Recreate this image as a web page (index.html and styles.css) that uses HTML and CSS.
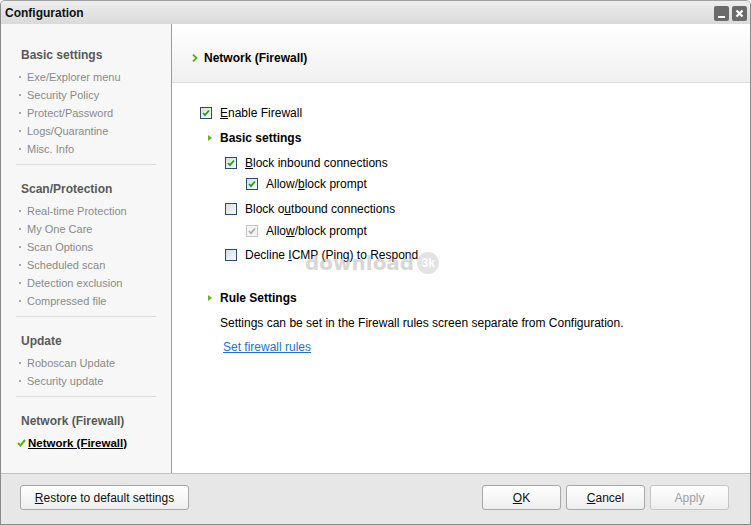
FILE: index.html
```html
<!DOCTYPE html>
<html>
<head>
<meta charset="utf-8">
<link rel="stylesheet" href="styles.css">
</head>
<body>
<div class="window">
  <div class="titlebar">
    <span class="title">Configuration</span>
    <div class="winbtns">
      <span class="winbtn"><svg width="15" height="15" viewBox="0 0 15 15"><rect x="4" y="10" width="7" height="2" fill="#fff"/></svg></span>
      <span class="winbtn"><svg width="15" height="15" viewBox="0 0 15 15"><path d="M4.5 4.5 L10.5 10.5 M10.5 4.5 L4.5 10.5" stroke="#fff" stroke-width="2.2"/></svg></span>
    </div>
  </div>
  <div class="main">
    <nav class="sidebar">
      <div class="group first">
        <div class="ghead">Basic settings</div>
        <div class="item">Exe/Explorer menu</div>
        <div class="item">Security Policy</div>
        <div class="item">Protect/Password</div>
        <div class="item">Logs/Quarantine</div>
        <div class="item">Misc. Info</div>
      </div>
      <div class="group">
        <div class="ghead">Scan/Protection</div>
        <div class="item">Real-time Protection</div>
        <div class="item">My One Care</div>
        <div class="item">Scan Options</div>
        <div class="item">Scheduled scan</div>
        <div class="item">Detection exclusion</div>
        <div class="item">Compressed file</div>
      </div>
      <div class="group">
        <div class="ghead">Update</div>
        <div class="item">Roboscan Update</div>
        <div class="item">Security update</div>
      </div>
      <div class="group last">
        <div class="ghead">Network (Firewall)</div>
        <div class="item selected"><svg class="tick" width="9" height="8" viewBox="0 0 9 8"><path d="M1 4 L3.5 6.5 L8 1" stroke="#5fae1f" stroke-width="2" fill="none"/></svg><span>Network (Firewall)</span></div>
      </div>
    </nav>
    <section class="content">
      <div class="chead">
        <svg class="chev" width="6" height="8" viewBox="0 0 6 8"><path d="M1 0.5 L4.5 4 L1 7.5" stroke="#5fae1f" stroke-width="1.8" fill="none"/></svg>
        <span>Network (Firewall)</span>
      </div>
      <div class="cbody">
        <div class="row r-enable">
          <span class="cb on"><svg width="12" height="12" viewBox="0 0 12 12"><path d="M3 6 L5 8.2 L9 3.5" stroke="#1fa01f" stroke-width="1.8" fill="none"/></svg></span>
          <span class="lbl"><u>E</u>nable Firewall</span>
        </div>
        <div class="row sub r-basic"><span class="tri"></span><b>Basic settings</b></div>
        <div class="row lvl1 r-in">
          <span class="cb on"><svg width="12" height="12" viewBox="0 0 12 12"><path d="M3 6 L5 8.2 L9 3.5" stroke="#1fa01f" stroke-width="1.8" fill="none"/></svg></span>
          <span class="lbl"><u>B</u>lock inbound connections</span>
        </div>
        <div class="row lvl2 r-allow1">
          <span class="cb on"><svg width="12" height="12" viewBox="0 0 12 12"><path d="M3 6 L5 8.2 L9 3.5" stroke="#1fa01f" stroke-width="1.8" fill="none"/></svg></span>
          <span class="lbl">Allow/<u>b</u>lock prompt</span>
        </div>
        <div class="row lvl1 r-out">
          <span class="cb"></span>
          <span class="lbl">Block o<u>u</u>tbound connections</span>
        </div>
        <div class="row lvl2 r-allow2">
          <span class="cb dis"><svg width="12" height="12" viewBox="0 0 12 12"><path d="M3 6 L5 8.2 L9 3.5" stroke="#a8a8a8" stroke-width="1.6" fill="none"/></svg></span>
          <span class="lbl">Allo<u>w</u>/block prompt</span>
        </div>
        <div class="row lvl1 r-icmp">
          <span class="cb"></span>
          <span class="lbl">Decline <u>I</u>CMP (Ping) to Respond</span>
        </div>
        <div class="row sub r-rule"><span class="tri"></span><b>Rule Settings</b></div>
        <div class="row txt r-desc">Settings can be set in the Firewall rules screen separate from Configuration.</div>
        <div class="row txt r-link"><a class="link">Set firewall rules</a></div>
        <div class="watermark"><span class="wm-text">download</span><span class="wm-logo">3k</span></div>
      </div>
    </section>
  </div>
  <div class="footer">
    <button class="btn restore"><u>R</u>estore to default settings</button>
    <div class="spacer"></div>
    <button class="btn"><u>O</u>K</button>
    <button class="btn"><u>C</u>ancel</button>
    <button class="btn disabled">Apply</button>
  </div>
</div>
</body>
</html>
```

FILE: styles.css
```css
html, body {
  margin: 0;
  padding: 0;
  background: #fff;
}
body {
  font-family: "Liberation Sans", Arial, sans-serif;
  font-size: 12px;
  color: #000;
}
.window {
  width: 751px;
  height: 525px;
  box-sizing: border-box;
  border: 1px solid #8a8a8a;
  border-top-color: #a0a0a0;
  border-radius: 5px 5px 0 0;
  display: flex;
  flex-direction: column;
  overflow: hidden;
}
.titlebar {
  height: 23px;
  flex: none;
  background: linear-gradient(#ededed, #dadada);
  display: flex;
  align-items: center;
  padding: 0 3px 0 4px;
}
.title {
  font-weight: bold;
  font-size: 12px;
  flex: 1;
  color: #111;
  padding-top: 1px;
}
.winbtns {
  display: flex;
  gap: 3px;
  padding-top: 1px;
}
.winbtn {
  width: 15px;
  height: 15px;
  background: #6a6a6a;
  border-radius: 2px;
  display: block;
}
.winbtn svg { display: block; }
.main {
  flex: 1;
  display: flex;
  min-height: 0;
}
.sidebar {
  width: 170px;
  flex: none;
  background: #f7f7f7;
  border-right: 1px solid #9c9c9c;
  padding-top: 22px;
}
.group {
  margin: 0 15px 0 15px;
  padding: 15px 0 6px;
  border-bottom: 1px solid #dedede;
}
.group.first { padding-top: 0; }
.group.last { border-bottom: none; }
.ghead {
  font-weight: bold;
  font-size: 12px;
  color: #595959;
  line-height: 18px;
  padding-left: 5px;
  margin-bottom: 4px;
}
.item {
  font-size: 11px;
  line-height: 18px;
  color: #8a8a8a;
  padding-left: 11px;
  position: relative;
}
.item::before {
  content: "";
  position: absolute;
  left: 3px;
  top: 8px;
  width: 2px;
  height: 2px;
  background: #a8a8a8;
}
.item.selected {
  padding-left: 1px;
  margin-top: 3px;
  color: #000;
  font-weight: bold;
  font-size: 11.5px;
  display: flex;
  align-items: center;
  gap: 2px;
}
.item.selected::before { display: none; }
.item.selected span { text-decoration: underline; }
.tick { display: block; }
.content {
  flex: 1;
  display: flex;
  flex-direction: column;
  background: #fff;
}
.chead {
  height: 59px;
  flex: none;
  box-sizing: border-box;
  background: linear-gradient(#ffffff, #f0f0f0);
  border-bottom: 1px solid #dcdcdc;
  display: flex;
  align-items: center;
  padding: 9px 0 0 20px;
  gap: 6px;
  font-weight: bold;
  font-size: 12px;
}
.chev { display: block; }
.cbody {
  flex: 1;
  padding: 20px 0 0 28px;
  position: relative;
}
.row {
  height: 20px;
  display: flex;
  align-items: center;
}
.cb {
  width: 12px;
  height: 12px;
  box-sizing: border-box;
  border: 1px solid #2a4c70;
  background: linear-gradient(135deg, #dcdcdc, #fafafa);
  margin-right: 8px;
  flex: none;
  position: relative;
}
.cb svg { position: absolute; left: -1px; top: -1px; }
.cb.dis {
  border-color: #c4c4c4;
  background: #f4f4f4;
}
.lbl { font-size: 12px; }
.lvl1 { padding-left: 25px; }
.lvl2 { padding-left: 46px; }
.sub { padding-left: 8px; font-size: 12px; }
.tri {
  width: 0;
  height: 0;
  border-left: 4px solid #6ab023;
  border-top: 3px solid transparent;
  border-bottom: 3px solid transparent;
  margin-right: 8px;
}
.txt { padding-left: 20px; }
.r-basic { margin-top: 5px; }
.r-in { margin-top: 5px; }
.r-allow1 { margin-top: 1px; }
.r-out { margin-top: 5px; }
.r-allow2 { margin-top: 2px; }
.r-icmp { margin-top: 4px; }
.r-rule { margin-top: 23px; }
.r-desc { margin-top: 5px; }
.r-link { margin-top: 4px; padding-left: 23px; }
.link {
  color: #1f73c8;
  text-decoration: underline;
}
.watermark {
  position: absolute;
  left: 133px;
  top: 169px;
  display: flex;
  align-items: center;
  gap: 3px;
  opacity: 0.5;
}
.wm-text {
  font-family: "DejaVu Sans", sans-serif;
  font-weight: bold;
  font-size: 20px;
  line-height: 20px;
  color: #b0b0b0;
}
.wm-logo {
  width: 22px;
  height: 22px;
  border-radius: 50%;
  background: #c8c8c8;
  color: #fff;
  font-weight: bold;
  font-size: 12px;
  display: flex;
  align-items: center;
  justify-content: center;
}
.footer {
  height: 51px;
  flex: none;
  box-sizing: border-box;
  border-top: 1px solid #c2c2c2;
  background: #e7e7e7;
  display: flex;
  align-items: flex-start;
  padding: 11px 21px 0 19px;
  gap: 5px;
}
.spacer { flex: 1; }
.btn {
  width: 79px;
  height: 25px;
  box-sizing: border-box;
  border: 1px solid #a8a8a8;
  border-radius: 3px;
  background: linear-gradient(#ffffff, #eeeeee);
  font-family: "Liberation Sans", Arial, sans-serif;
  font-size: 12px;
  color: #111;
  padding: 0;
}
.btn.restore { width: 169px; }
.btn.disabled {
  color: #a0a0a0;
  border-color: #c4c4c4;
}
```
